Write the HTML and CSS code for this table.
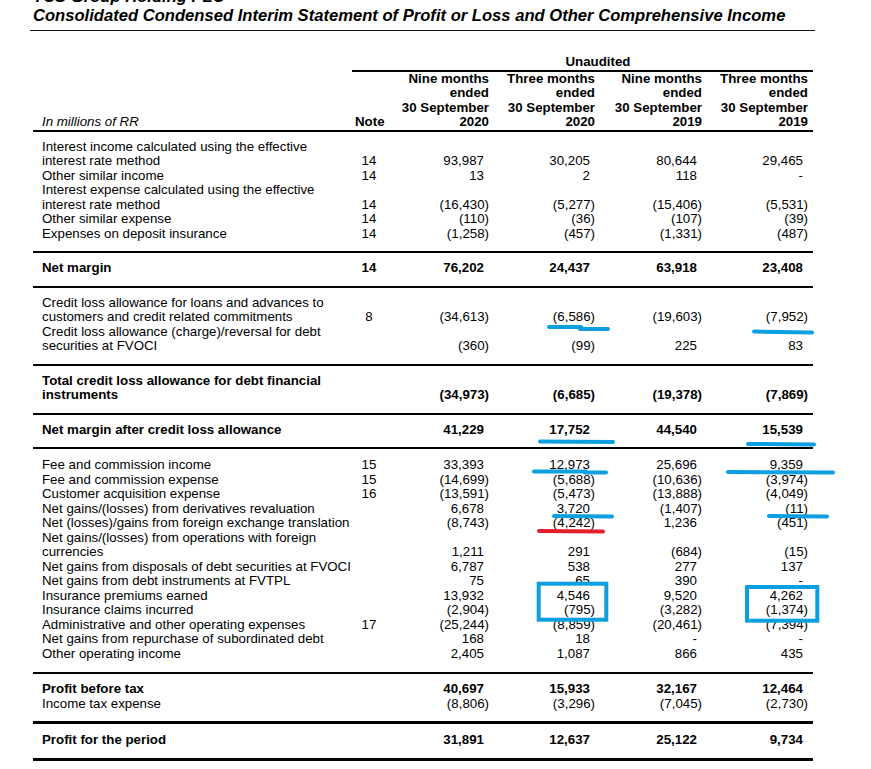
FILE: index.html
```html
<!DOCTYPE html>
<html>
<head>
<meta charset="utf-8">
<title>Consolidated Condensed Interim Statement of Profit or Loss</title>
<link rel="stylesheet" href="styles.css">
</head>
<body>
<div class="titles">
  <div>TCS Group Holding PLC</div>
  <div>Consolidated Condensed Interim Statement of Profit or Loss and Other Comprehensive Income</div>
</div>

<div class="statement">
  <div class="unaudited">Unaudited</div>
  <div class="row head">
    <div class="label"><i>In millions of RR</i></div>
    <div class="note">Note</div>
    <div class="v">Nine months<br>ended<br>30 September<br>2020</div>
    <div class="v">Three months<br>ended<br>30 September<br>2020</div>
    <div class="v">Nine months<br>ended<br>30 September<br>2019</div>
    <div class="v">Three months<br>ended<br>30 September<br>2019</div>
  </div>

  <div class="blk">
    <div class="row"><div class="label">Interest income calculated using the effective<br>interest rate method</div><div class="note">14</div><div class="v">93,987</div><div class="v">30,205</div><div class="v">80,644</div><div class="v">29,465</div></div>
    <div class="row"><div class="label">Other similar income</div><div class="note">14</div><div class="v">13</div><div class="v">2</div><div class="v">118</div><div class="v">-</div></div>
    <div class="row"><div class="label">Interest expense calculated using the effective<br>interest rate method</div><div class="note">14</div><div class="v n">(16,430)</div><div class="v n">(5,277)</div><div class="v n">(15,406)</div><div class="v n">(5,531)</div></div>
    <div class="row"><div class="label">Other similar expense</div><div class="note">14</div><div class="v n">(110)</div><div class="v n">(36)</div><div class="v n">(107)</div><div class="v n">(39)</div></div>
    <div class="row"><div class="label">Expenses on deposit insurance</div><div class="note">14</div><div class="v n">(1,258)</div><div class="v n">(457)</div><div class="v n">(1,331)</div><div class="v n">(487)</div></div>
  </div>

  <div class="blk">
    <div class="row b"><div class="label">Net margin</div><div class="note">14</div><div class="v">76,202</div><div class="v">24,437</div><div class="v">63,918</div><div class="v">23,408</div></div>
  </div>

  <div class="blk">
    <div class="row"><div class="label">Credit loss allowance for loans and advances to<br>customers and credit related commitments</div><div class="note">8</div><div class="v n">(34,613)</div><div class="v n">(6,586)</div><div class="v n">(19,603)</div><div class="v n">(7,952)</div></div>
    <div class="row"><div class="label">Credit loss allowance (charge)/reversal for debt<br>securities at FVOCI</div><div class="note"></div><div class="v n">(360)</div><div class="v n">(99)</div><div class="v">225</div><div class="v">83</div></div>
  </div>

  <div class="blk">
    <div class="row b"><div class="label">Total credit loss allowance for debt financial<br>instruments</div><div class="note"></div><div class="v n">(34,973)</div><div class="v n">(6,685)</div><div class="v n">(19,378)</div><div class="v n">(7,869)</div></div>
  </div>

  <div class="blk">
    <div class="row b"><div class="label">Net margin after credit loss allowance</div><div class="note"></div><div class="v">41,229</div><div class="v">17,752</div><div class="v">44,540</div><div class="v">15,539</div></div>
  </div>

  <div class="blk fee">
    <div class="row"><div class="label">Fee and commission income</div><div class="note">15</div><div class="v">33,393</div><div class="v">12,973</div><div class="v">25,696</div><div class="v">9,359</div></div>
    <div class="row"><div class="label">Fee and commission expense</div><div class="note">15</div><div class="v n">(14,699)</div><div class="v n">(5,688)</div><div class="v n">(10,636)</div><div class="v n">(3,974)</div></div>
    <div class="row"><div class="label">Customer acquisition expense</div><div class="note">16</div><div class="v n">(13,591)</div><div class="v n">(5,473)</div><div class="v n">(13,888)</div><div class="v n">(4,049)</div></div>
    <div class="row"><div class="label">Net gains/(losses) from derivatives revaluation</div><div class="note"></div><div class="v">6,678</div><div class="v">3,720</div><div class="v n">(1,407)</div><div class="v n">(11)</div></div>
    <div class="row"><div class="label">Net (losses)/gains from foreign exchange translation</div><div class="note"></div><div class="v n">(8,743)</div><div class="v n">(4,242)</div><div class="v">1,236</div><div class="v n">(451)</div></div>
    <div class="row"><div class="label">Net gains/(losses) from operations with foreign<br>currencies</div><div class="note"></div><div class="v">1,211</div><div class="v">291</div><div class="v n">(684)</div><div class="v n">(15)</div></div>
    <div class="row"><div class="label">Net gains from disposals of debt securities at FVOCI</div><div class="note"></div><div class="v">6,787</div><div class="v">538</div><div class="v">277</div><div class="v">137</div></div>
    <div class="row"><div class="label">Net gains from debt instruments at FVTPL</div><div class="note"></div><div class="v">75</div><div class="v">65</div><div class="v">390</div><div class="v">-</div></div>
    <div class="row"><div class="label">Insurance premiums earned</div><div class="note"></div><div class="v">13,932</div><div class="v">4,546</div><div class="v">9,520</div><div class="v">4,262</div></div>
    <div class="row"><div class="label">Insurance claims incurred</div><div class="note"></div><div class="v n">(2,904)</div><div class="v n">(795)</div><div class="v n">(3,282)</div><div class="v n">(1,374)</div></div>
    <div class="row"><div class="label">Administrative and other operating expenses</div><div class="note">17</div><div class="v n">(25,244)</div><div class="v n">(8,859)</div><div class="v n">(20,461)</div><div class="v n">(7,394)</div></div>
    <div class="row"><div class="label">Net gains from repurchase of subordinated debt</div><div class="note"></div><div class="v">168</div><div class="v">18</div><div class="v">-</div><div class="v">-</div></div>
    <div class="row"><div class="label">Other operating income</div><div class="note"></div><div class="v">2,405</div><div class="v">1,087</div><div class="v">866</div><div class="v">435</div></div>
  </div>

  <div class="blk profit">
    <div class="row b"><div class="label">Profit before tax</div><div class="note"></div><div class="v">40,697</div><div class="v">15,933</div><div class="v">32,167</div><div class="v">12,464</div></div>
    <div class="row"><div class="label">Income tax expense</div><div class="note"></div><div class="v n">(8,806)</div><div class="v n">(3,296)</div><div class="v n">(7,045)</div><div class="v n">(2,730)</div></div>
  </div>

  <div class="blk period">
    <div class="row b"><div class="label">Profit for the period</div><div class="note"></div><div class="v">31,891</div><div class="v">12,637</div><div class="v">25,122</div><div class="v">9,734</div></div>
  </div>
</div>

<svg class="marks" width="871" height="769" viewBox="0 0 871 769" aria-hidden="true">
  <g fill="none" stroke="#0c9fe0" stroke-width="4" stroke-linecap="round">
    <path d="M549 327 L581 327 M580 329 L608 329"/>
    <path d="M754 331.5 L812 332.5"/>
    <path d="M540 441.5 L613 442"/>
    <path d="M748 444 L814 444.5"/>
    <path d="M534 471.5 L586 471.5 M585 472.5 L606 472.5"/>
    <path d="M728 472 L833 472.5"/>
    <path d="M554 516 L612 516.5"/>
    <path d="M769 516 L827 516.5"/>
    <rect x="538.7" y="583.7" width="67.6" height="36"/>
    <rect x="747" y="587" width="70.3" height="33.7"/>
  </g>
  <path d="M539 531 L603 531.5" fill="none" stroke="#e3202a" stroke-width="4" stroke-linecap="round"/>
</svg>
</body>
</html>
```

FILE: styles.css
```css
* {
  box-sizing: border-box;
  margin: 0;
  padding: 0;
}

html,
body {
  background: #fff;
}

body {
  position: relative;
  width: 871px;
  height: 769px;
  overflow: hidden;
  font-family: "Liberation Sans", Arial, sans-serif;
  font-size: 13.3px;
  line-height: 14.5px;
  color: #000;
}

.titles {
  margin: -13px 0 0 30px;
  width: 785px;
  padding: 0 0 5px 3px;
  border-bottom: 1px solid #111;
  font-size: 16.6px;
  line-height: 19px;
  font-weight: bold;
  font-style: italic;
  white-space: nowrap;
}

.statement {
  margin: 24px 0 0 33px;
  width: 780px;
}

.unaudited {
  margin-left: 319px;
  padding-left: 31px;
  text-align: center;
  font-weight: bold;
  border-bottom: 2px solid #000;
}

.row {
  display: grid;
  grid-template-columns: 313px 28px 106px 106px 107px 106px;
  align-items: end;
  padding: 0 5px 0 9px;
}

.row.b {
  font-weight: bold;
}

.head {
  font-weight: bold;
  border-bottom: 2px solid #000;
}

.head .label {
  font-weight: normal;
}

.label {
  white-space: nowrap;
}

.note {
  text-align: center;
  white-space: nowrap;
}

.head .note {
  text-align: right;
}

.v {
  text-align: right;
  white-space: nowrap;
  padding-right: 5px;
}

.v.n,
.head .v {
  padding-right: 0;
}

.blk {
  padding: 8px 0 10px;
  border-bottom: 2px solid #000;
}

.blk.fee {
  padding: 9px 0 11px;
}

.blk.profit {
  border-bottom-width: 3px;
}

.blk.period {
  padding-top: 9px;
  border-bottom-width: 3px;
}

.marks {
  position: absolute;
  top: 0;
  left: 0;
  pointer-events: none;
}
```
